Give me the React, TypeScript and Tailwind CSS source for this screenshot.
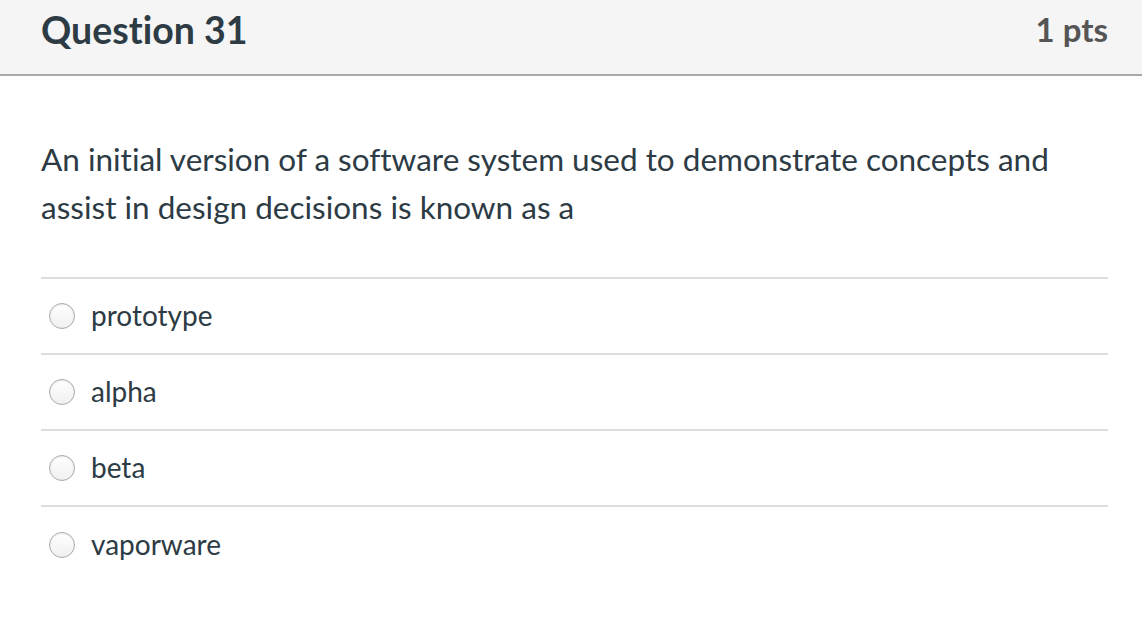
const options = ["prototype", "alpha", "beta", "vaporware"];

export default function App() {
  return (
    <div
      className="w-[1142px] h-[620px] bg-white text-[#2d3b45] overflow-hidden [font-variant-ligatures:none]"
      style={{ fontFamily: "Lato, 'Open Sans', sans-serif" }}
    >
      {/* Header */}
      <div className="h-[76px] bg-[#f5f5f5] border-b-2 border-[#aaaaaa] flex items-center justify-between pl-[41px] pr-[34px]">
        <div className="text-[37.5px] font-bold leading-none -mt-[15px]">Question 31</div>
        <div className="text-[33px] font-bold text-[#555555] leading-none -mt-[15px]">1 pts</div>
      </div>

      {/* Body */}
      <div className="pl-[41px] pr-[34px]">
        <p className="pt-[59px] text-[31.5px] leading-[48px] pr-[20px]">
          An initial version of a software system used to demonstrate concepts and
          assist in design decisions is known as a
        </p>

        <div className="mt-[46px] border-t-2 border-[#dddddd]">
          {options.map((opt) => (
            <label
              key={opt}
              className="flex items-center h-[76px] border-b-2 border-[#dddddd] last:border-b-0"
            >
              <span className="ml-[8px] w-[26px] h-[26px] rounded-full border border-[#aaaaaa] bg-gradient-to-b from-white to-[#f0f0f0] shadow-[inset_0_1px_2px_rgba(0,0,0,0.08)]" />
              <span className="ml-[16px] text-[28px] leading-none -mt-[3px]">{opt}</span>
            </label>
          ))}
        </div>
      </div>
    </div>
  );
}
